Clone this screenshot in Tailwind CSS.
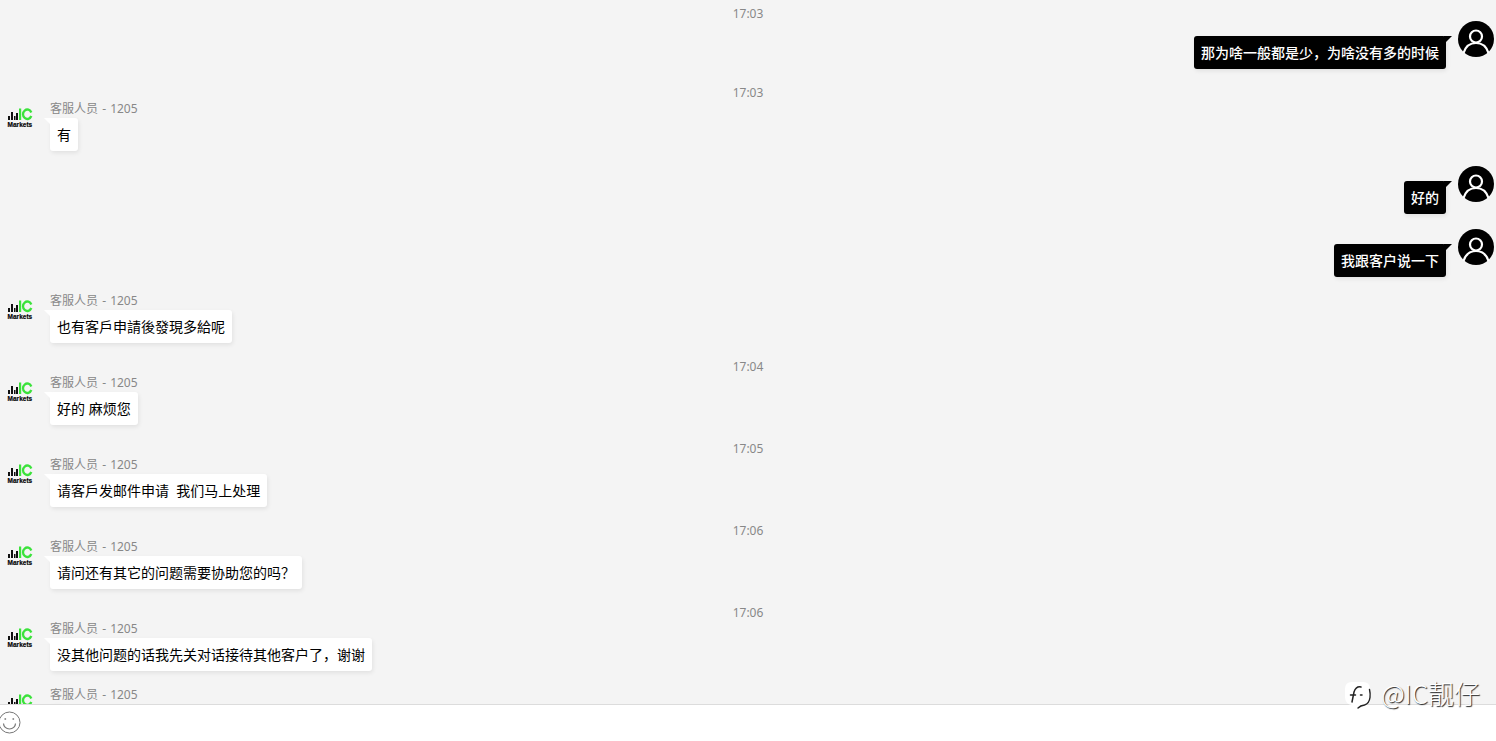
<!DOCTYPE html>
<html lang="zh-CN">
<head>
    <meta charset="UTF-8">
    <meta name="viewport" content="width=device-width, initial-scale=1.0">
    <title>在线客服</title>
    <script src="https://cdn.jsdelivr.net/npm/@tailwindcss/browser@4"></script>
</head>
<body class="font-['Noto_Sans','Noto_Sans_CJK_SC',sans-serif]">
    <!-- 共用图标 -->
    <svg class="hidden">
        <symbol id="logo" viewBox="0 0 26 22">
            <path d="M1 9h2v4H1zM4 5h2v8H4zM7 9h1.500v4H7zM9 6h2v7H9z" fill="#111"/>
            <path d="M12 1.500h2.200V13H12z" fill="#3be23b"/>
            <path d="M24.300 5.500A4.300 4.700 0 1 0 24.300 9" fill="none" stroke="#3be23b" stroke-width="2.300"/>
            <text x=".6" y="20" font-family="Liberation Sans, sans-serif" font-size="6.500" font-weight="bold" fill="#000" stroke="#000" stroke-width=".15">Markets</text>
        </symbol>
        <symbol id="user" viewBox="0 0 36 36">
            <circle cx="18" cy="18" r="18" fill="#000"/>
            <circle cx="18" cy="15.500" r="6" fill="none" stroke="#fff" stroke-width="2.200"/>
            <path d="M5.500 32C7.500 25.500 12 22 18 22S28.500 25.500 30.500 32" fill="none" stroke="#fff" stroke-width="2.200"/>
        </symbol>
    </svg>

    <div class="relative flex h-screen flex-col bg-white">
        <main id="messages" class="flex-1 overflow-hidden bg-[#f4f4f4] pt-[5px] text-sm"></main>

        <footer class="flex h-[37px] shrink-0 items-start border-t border-[#dcdcdc] bg-white pt-1.5">
            <button type="button" aria-label="表情" class="-ml-0.5">
                <svg class="size-[23px]" viewBox="0 0 23 23" fill="none" stroke="#777">
                    <circle cx="11.500" cy="11.500" r="10.500"/>
                    <path d="M5.500 12.500a6 5.500 0 0 0 12 0" stroke-width="1.200"/>
                    <path d="M6.500 8h1.600M14.500 8h1.600" stroke-width="1.600"/>
                </svg>
            </button>
            <textarea aria-label="输入消息" class="h-7 flex-1 resize-none outline-none"></textarea>
        </footer>

        <!-- 水印 -->
        <div class="pointer-events-none absolute right-4 bottom-[30px] flex items-center gap-2 font-['Noto_Sans_CJK_SC',sans-serif] text-[26px] leading-9 font-light text-white [text-shadow:1px_1px_1px_#222]">
            <svg class="mt-1 size-[30px]" viewBox="0 0 30 30" fill="none" stroke-linecap="round">
                <path d="M9 2h11q7 0 7 7v9q-1 6-6 7l-5 3 1-3H9q-7-1-7-8V9q0-7 7-7z" fill="#fff"/>
                <path d="M18 7q-5-1-7 5L9 22M7.500 15h5M17.500 15h1.500" stroke="#222" stroke-width="1.500"/>
                <path d="M26.500 9.500q1 4 .5 8-.8 6-5.500 7.500-4 .5-6.500 3" stroke="#222" stroke-width="1.400"/>
            </svg>
            <span>@IC靓仔</span>
        </div>
    </div>

    <template id="time-row">
        <time class="block h-4 text-center text-xs leading-[18px] text-[#888]"></time>
    </template>
    <template id="agent-row">
        <div class="flex items-start gap-[17px] pb-[15px] pl-[7px]">
            <svg class="mt-[7px] h-[22px] w-[26px] shrink-0"><use href="#logo"/></svg>
            <div>
                <div class="flex gap-px text-xs leading-[18px] text-[#888]">
                    <span>客服人员</span><span class="whitespace-pre"> - </span><span>1205</span>
                </div>
                <div class="relative w-fit rounded-[3px] bg-white p-[7px] leading-[19px] text-black shadow-[1px_2px_4px_rgba(0,0,0,0.08)]">
                    <i class="absolute top-0 -left-1.5 size-2 bg-white [clip-path:polygon(0_0,100%_0,100%_100%)]"></i>
                    <p class="whitespace-pre"></p>
                </div>
            </div>
        </div>
    </template>
    <template id="user-row">
        <div class="flex items-start justify-end gap-3 pr-0.5 pb-[15px]">
            <div class="relative mt-[15px] rounded-[3px] bg-black p-[7px] leading-[19px] font-medium text-white shadow-[1px_2px_4px_rgba(0,0,0,0.08)]">
                <i class="absolute top-0 -right-1.5 size-2 bg-black [clip-path:polygon(0_0,100%_0,0_100%)]"></i>
                <p class="whitespace-pre"></p>
            </div>
            <svg class="size-9 shrink-0"><use href="#user"/></svg>
        </div>
    </template>

    <script>
        const messages = [
            ['time', '17:03'],
            ['user', '那为啥一般都是少，为啥没有多的时候'],
            ['time', '17:03'],
            ['agent', '有'],
            ['user', '好的'],
            ['user', '我跟客户说一下'],
            ['agent', '也有客戶申請後發現多給呢'],
            ['time', '17:04'],
            ['agent', '好的 麻烦您'],
            ['time', '17:05'],
            ['agent', '请客戶发邮件申请  我们马上处理'],
            ['time', '17:06'],
            ['agent', '请问还有其它的问题需要协助您的吗？'],
            ['time', '17:06'],
            ['agent', '没其他问题的话我先关对话接待其他客户了，谢谢'],
            ['agent', '']
        ];

        const list = document.getElementById('messages');
        messages.forEach(([type, text]) => {
            const row = document.getElementById(type + '-row').content.cloneNode(true);
            row.querySelector('time, p').textContent = text;
            list.appendChild(row);
        });
    </script>
</body>
</html>
